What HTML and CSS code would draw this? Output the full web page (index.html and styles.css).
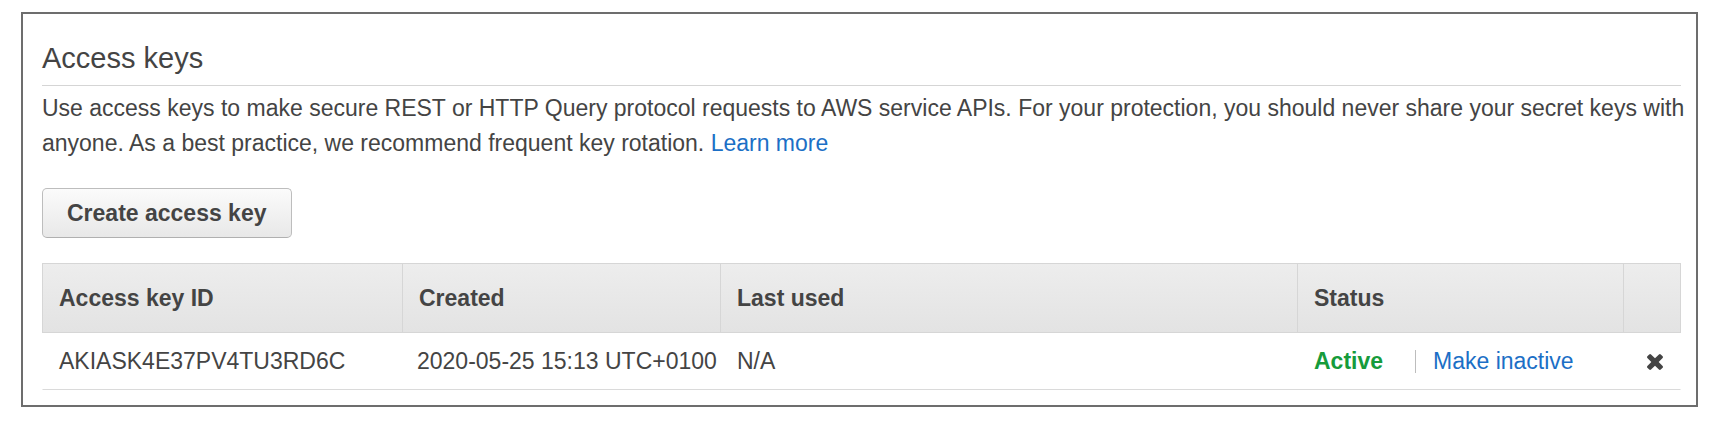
FILE: index.html
```html
<!DOCTYPE html>
<html lang="en">
<head>
<meta charset="utf-8">
<title>Access keys</title>
<link rel="stylesheet" href="styles.css">
</head>
<body>
<section class="panel">
  <h2 class="panel-title">Access keys</h2>
  <p class="panel-desc">Use access keys to make secure REST or HTTP Query protocol requests to AWS service APIs. For your protection, you should never share your secret keys with anyone. As a best practice, we recommend frequent key rotation. <a class="link" href="#">Learn more</a></p>
  <button class="btn" type="button">Create access key</button>
  <div class="keys">
    <div class="keys-head">
      <div class="th">Access key ID</div>
      <div class="th">Created</div>
      <div class="th">Last used</div>
      <div class="th">Status</div>
      <div class="th"></div>
    </div>
    <div class="keys-row">
      <div class="td">AKIASK4E37PV4TU3RD6C</div>
      <div class="td">2020-05-25 15:13 UTC+0100</div>
      <div class="td">N/A</div>
      <div class="td status">
        <span class="active">Active</span>
        <span class="sep"></span>
        <a class="link" href="#">Make inactive</a>
      </div>
      <div class="td del">
        <svg class="x-icon" viewBox="110 258 1188 1188" width="16" height="16" aria-hidden="true"><path fill="#444" d="M1298 1214q0 40-28 68l-136 136q-28 28-68 28t-68-28l-294-294-294 294q-28 28-68 28t-68-28l-136-136q-28-28-28-68t28-68l294-294-294-294q-28-28-28-68t28-68l136-136q28-28 68-28t68 28l294 294 294-294q28-28 68-28t68 28l136 136q28 28 28 68t-28 68l-294 294 294 294q28 28 28 68z"/></svg>
      </div>
    </div>
  </div>
</section>
</body>
</html>
```

FILE: styles.css
```css
html, body {
  margin: 0;
  padding: 0;
  background: #ffffff;
}

body {
  font-family: "Liberation Sans", Arial, Helvetica, sans-serif;
  color: #444444;
}

.panel {
  box-sizing: border-box;
  width: 1677px;
  margin: 12px 0 0 21px;
  border: 2px solid #6d6d6d;
  padding: 28px 15px 15px 19px;
}

.panel-title {
  margin: 0;
  font-size: 29px;
  line-height: 32px;
  font-weight: normal;
  color: #444444;
  padding-bottom: 11px;
  border-bottom: 1px solid #d5d5d5;
}

.panel-desc {
  margin: 5px -10px 0 0;
  font-size: 23px;
  line-height: 35px;
  color: #444444;
}

.link {
  color: #1c6fc6;
  text-decoration: none;
}

.btn {
  display: block;
  box-sizing: border-box;
  height: 50px;
  margin-top: 27px;
  padding: 0 24px;
  font-family: "Liberation Sans", Arial, Helvetica, sans-serif;
  font-size: 23px;
  font-weight: bold;
  color: #444444;
  background: linear-gradient(#fbfbfb, #e8e8e8);
  border: 1px solid #bdbdbd;
  border-bottom-color: #b0b0b0;
  border-radius: 5px;
}

.keys {
  margin-top: 25px;
  font-size: 23px;
}

.keys-head,
.keys-row {
  display: grid;
  grid-template-columns: 359px 318px 577px 326px 1fr;
}

.keys-head {
  border: 1px solid #d6d6d6;
  background: linear-gradient(#ededed, #e3e3e3);
}

.keys-row {
  border: 1px solid transparent;
  border-top: 0;
  border-bottom: 1px solid #dadada;
}

.th {
  height: 68px;
  display: flex;
  align-items: center;
  padding-left: 16px;
  font-weight: bold;
  color: #444444;
  border-left: 1px solid #d6d6d6;
}

.th:first-child {
  border-left: 0;
}

.td {
  height: 56px;
  display: flex;
  align-items: center;
  padding-left: 16px;
  border-left: 1px solid transparent;
  white-space: nowrap;
  color: #444444;
}

.td:first-child {
  border-left: 0;
}

.td:nth-child(2) {
  padding-left: 14px;
}

.active {
  font-weight: bold;
  color: #169b3b;
}

.sep {
  display: inline-block;
  width: 1px;
  height: 23px;
  background: #bdbdbd;
  margin: 0 17px 0 32px;
}

.del {
  padding-left: 23px;
}

.x-icon {
  display: block;
  margin-top: 2px;
}
```
